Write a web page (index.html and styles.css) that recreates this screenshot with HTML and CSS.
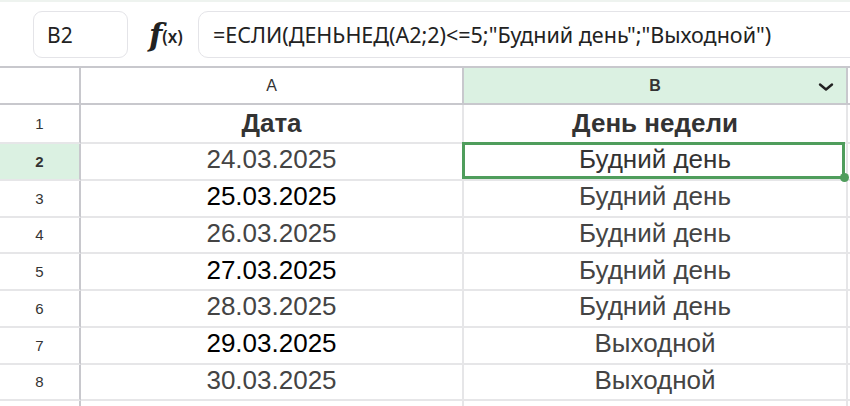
FILE: index.html
```html
<!DOCTYPE html>
<html lang="ru">
<head>
    <meta charset="UTF-8" />
    <title>Таблица | День недели</title>
    <link rel="stylesheet" href="styles.css">
</head>
<body>

<div class="toolbar">
    <div class="namebox">B2</div>
    <div class="fx"><span class="fx-f">f</span><span class="fx-x">(x)</span></div>
    <div class="formula">=ЕСЛИ(ДЕНЬНЕД(A2;2)&lt;=5;"Будний день";"Выходной")</div>
</div>

<div class="sheet">
    <div class="corner"></div>
    <div class="col-head">A</div>
    <div class="col-head active">B<span class="chevron"><svg width="16" height="10" viewBox="0 0 16 10"><path d="M2 2.5 L8 7.5 L14 2.5" fill="none" stroke="#222" stroke-width="2.4" stroke-linecap="round" stroke-linejoin="round"/></svg></span></div>
    <div class="col-head rest"></div>

    <div class="row-head">1</div>
    <div class="cell head-cell">Дата</div>
    <div class="cell head-cell">День недели</div>
    <div class="cell rest"></div>

    <div class="row-head active">2</div>
    <div class="cell grey">24.03.2025</div>
    <div class="cell selected">Будний день<span class="handle"></span></div>
    <div class="cell rest"></div>

    <div class="row-head">3</div>
    <div class="cell">25.03.2025</div>
    <div class="cell grey">Будний день</div>
    <div class="cell rest"></div>

    <div class="row-head">4</div>
    <div class="cell grey">26.03.2025</div>
    <div class="cell grey">Будний день</div>
    <div class="cell rest"></div>

    <div class="row-head">5</div>
    <div class="cell">27.03.2025</div>
    <div class="cell grey">Будний день</div>
    <div class="cell rest"></div>

    <div class="row-head">6</div>
    <div class="cell grey">28.03.2025</div>
    <div class="cell grey">Будний день</div>
    <div class="cell rest"></div>

    <div class="row-head">7</div>
    <div class="cell">29.03.2025</div>
    <div class="cell grey">Выходной</div>
    <div class="cell rest"></div>

    <div class="row-head">8</div>
    <div class="cell grey">30.03.2025</div>
    <div class="cell grey">Выходной</div>
    <div class="cell rest"></div>

    <div class="row-head"></div>
    <div class="cell"></div>
    <div class="cell"></div>
    <div class="cell rest"></div>
</div>

</body>
</html>
```

FILE: styles.css
```css
body {
    margin: 0;
    width: 850px;
    height: 406px;
    overflow: hidden;
    background: #fff;
    font-family: "Liberation Sans", Arial, sans-serif;
}
.toolbar {
    height: 66px;
    box-sizing: border-box;
    border-top: 2px solid #eef3ef;
    display: flex;
    align-items: center;
    padding: 8px 0 7px 33px;
    font-family: "Noto Sans", "Open Sans", sans-serif;
    color: #222;
}
.namebox {
    width: 95px;
    height: 47px;
    box-sizing: border-box;
    border: 1.5px solid #e4e4e8;
    border-radius: 9px;
    padding-left: 13px;
    display: flex;
    align-items: center;
    font-size: 21px;
}
.fx {
    width: 70px;
    display: flex;
    align-items: center;
    padding-left: 21px;
    box-sizing: border-box;
    color: #222;
}
.fx-f {
    font-family: "DejaVu Serif", "Liberation Serif", serif;
    font-style: italic;
    font-weight: 600;
    font-size: 31px;
    line-height: 1;
    margin-top: 2px;
}
.fx-x {
    font-size: 17px;
    font-weight: 600;
    margin-left: 0;
    margin-top: 3px;
}
.formula {
    flex: 1;
    height: 47px;
    margin-right: -20px;
    box-sizing: border-box;
    border: 1.5px solid #e4e4e8;
    border-radius: 10px;
    padding-left: 14px;
    display: flex;
    align-items: center;
    font-size: 21.5px;
    white-space: nowrap;
}
.sheet {
    display: grid;
    grid-template-columns: 81px 383px 384px 10px;
    grid-template-rows: 37px 39px repeat(7, 36.75px) 1fr;
    height: 340px;
    border-top: 2px solid #c8c8cd;
    color: #333;
}
.corner, .col-head {
    border-right: 2px solid #c8c8cd;
    border-bottom: 2px solid #c8c8cd;
}
.col-head {
    display: flex;
    align-items: center;
    justify-content: center;
    font-size: 16px;
    position: relative;
}
.col-head.active {
    background: #dbf1e2;
    font-weight: bold;
}
.col-head.rest {
    border-right: none;
}
.chevron {
    position: absolute;
    right: 12px;
    top: 14px;
    line-height: 0;
}
.row-head {
    border-right: 2px solid #c8c8cd;
    border-bottom: 2px solid #e6e6e8;
    display: flex;
    align-items: center;
    justify-content: center;
    font-size: 15px;
    color: #333;
}
.row-head.active {
    background: #dbf1e2;
    font-weight: bold;
}
.cell {
    border-right: 2px solid #e6e6e8;
    border-bottom: 2px solid #e6e6e8;
    display: flex;
    align-items: center;
    justify-content: center;
    font-size: 26px;
    color: #000;
    padding-bottom: 3px;
    box-sizing: border-box;
}
.cell.grey {
    color: #444;
}
.cell.head-cell {
    font-weight: bold;
    color: #333;
    padding-bottom: 1px;
}
.cell.rest {
    border-right: none;
}
.selected {
    position: relative;
    color: #333;
}
.selected::after {
    content: "";
    position: absolute;
    left: -2px;
    top: -2px;
    right: 1px;
    bottom: 0;
    border: 3px solid #4f9d5c;
}
.handle {
    position: absolute;
    right: -3px;
    bottom: -3px;
    width: 9px;
    height: 9px;
    border-radius: 50%;
    background: #4f9d5c;
    z-index: 2;
}
```
